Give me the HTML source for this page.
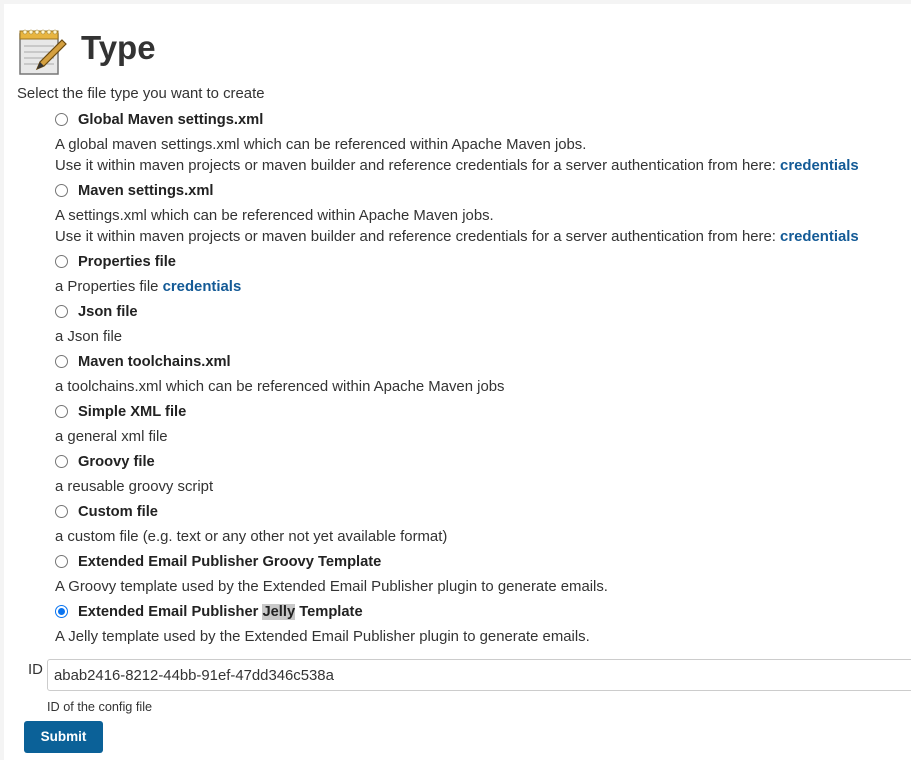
<!DOCTYPE html>
<html><head><meta charset="utf-8"><style>
body{margin:0;width:911px;height:760px;background:#fff;font-family:"Liberation Sans","DejaVu Sans",sans-serif;color:#333;font-size:14.9px;position:relative;overflow:hidden}
.topbar{position:absolute;left:0;top:0;width:911px;height:4px;background:#f4f4f4}
.leftbar{position:absolute;left:0;top:0;width:4px;height:760px;background:#f4f4f4}
.t{position:absolute;line-height:20px;white-space:nowrap}
.b{font-weight:bold;color:#222;font-size:14.7px}
a{color:#135a96;font-weight:bold;text-decoration:none}
.r{position:absolute;left:55px;width:11px;height:11px;border:1px solid #767676;border-radius:50%;background:#fff}
.r.on{border:1px solid #0a74f0;}
.r.on::after{content:"";position:absolute;left:2px;top:2px;width:7px;height:7px;border-radius:50%;background:#0a74f0}
</style></head><body>
<div class="topbar"></div><div class="leftbar"></div>
<svg style="position:absolute;left:18px;top:28px" width="50" height="48" viewBox="0 0 50 48">
<rect x="2" y="6" width="38" height="40" fill="#e8e8e8" stroke="#777" stroke-width="1.5"/>
<rect x="2" y="3" width="38" height="8" fill="#e8b540" stroke="#9a7420"/>
<g fill="#fff7d0" stroke="#a08030" stroke-width=".6"><circle cx="7" cy="4" r="2"/><circle cx="13" cy="4" r="2"/><circle cx="19" cy="4" r="2"/><circle cx="25" cy="4" r="2"/><circle cx="31" cy="4" r="2"/><circle cx="37" cy="4" r="2"/></g>
<g stroke="#aaa" stroke-width="1"><line x1="6" y1="18" x2="36" y2="18"/><line x1="6" y1="24" x2="36" y2="24"/><line x1="6" y1="30" x2="36" y2="30"/><line x1="6" y1="36" x2="36" y2="36"/></g>
<path d="M44 12 L48 16 L26 38 L19 41 L22 34 Z" fill="#d4a040" stroke="#6b4a10" stroke-width="1.2"/>
<path d="M22 34 L26 38 L19 41 Z" fill="#333"/>
</svg>
<div class="t b" style="left:81px;top:28px;font-size:33px;line-height:40px;color:#333">Type</div>
<div class="t" style="left:17px;top:84px">Select the file type you want to create</div>

<div class="r" style="top:113px"></div><div class="t b" style="left:78px;top:110px">Global Maven settings.xml</div>
<div class="t" style="left:55px;top:135px">A global maven settings.xml which can be referenced within Apache Maven jobs.</div>
<div class="t" style="left:55px;top:156px">Use it within maven projects or maven builder and reference credentials for a server authentication from here: <a>credentials</a></div>

<div class="r" style="top:184px"></div><div class="t b" style="left:78px;top:181px">Maven settings.xml</div>
<div class="t" style="left:55px;top:206px">A settings.xml which can be referenced within Apache Maven jobs.</div>
<div class="t" style="left:55px;top:227px">Use it within maven projects or maven builder and reference credentials for a server authentication from here: <a>credentials</a></div>

<div class="r" style="top:255px"></div><div class="t b" style="left:78px;top:252px">Properties file</div>
<div class="t" style="left:55px;top:277px">a Properties file <a>credentials</a></div>

<div class="r" style="top:305px"></div><div class="t b" style="left:78px;top:302px">Json file</div>
<div class="t" style="left:55px;top:327px">a Json file</div>

<div class="r" style="top:355px"></div><div class="t b" style="left:78px;top:352px">Maven toolchains.xml</div>
<div class="t" style="left:55px;top:377px">a toolchains.xml which can be referenced within Apache Maven jobs</div>

<div class="r" style="top:405px"></div><div class="t b" style="left:78px;top:402px">Simple XML file</div>
<div class="t" style="left:55px;top:427px">a general xml file</div>

<div class="r" style="top:455px"></div><div class="t b" style="left:78px;top:452px">Groovy file</div>
<div class="t" style="left:55px;top:477px">a reusable groovy script</div>

<div class="r" style="top:505px"></div><div class="t b" style="left:78px;top:502px">Custom file</div>
<div class="t" style="left:55px;top:527px">a custom file (e.g. text or any other not yet available format)</div>

<div class="r" style="top:555px"></div><div class="t b" style="left:78px;top:552px">Extended Email Publisher Groovy Template</div>
<div class="t" style="left:55px;top:577px">A Groovy template used by the Extended Email Publisher plugin to generate emails.</div>

<div class="r on" style="top:605px"></div><div class="t b" style="left:78px;top:602px">Extended Email Publisher <span style="background:#c8c8c8">Jelly</span> Template</div>
<div class="t" style="left:55px;top:627px">A Jelly template used by the Extended Email Publisher plugin to generate emails.</div>

<div class="t" style="left:28px;top:660px">ID</div>
<div style="position:absolute;left:47px;top:659px;width:870px;height:32px;border:1px solid #ccc;border-radius:3px;box-sizing:border-box"></div>
<div class="t" style="left:54px;top:666px">abab2416-8212-44bb-91ef-47dd346c538a</div>
<div class="t" style="left:47px;top:697px;font-size:12.7px">ID of the config file</div>
<div style="position:absolute;left:24px;top:721px;width:79px;height:32px;background:#0b6198;border-radius:3px;color:#fff;font-weight:bold;font-size:13.5px;line-height:32px;text-align:center">Submit</div>
</body></html>
